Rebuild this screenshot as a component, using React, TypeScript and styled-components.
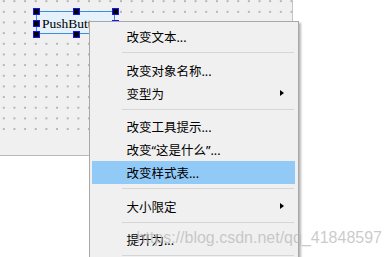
import React from "react";
import styled, { createGlobalStyle } from "styled-components";

const Global = createGlobalStyle`
  html, body {
    margin: 0;
    padding: 0;
    background: #ffffff;
  }
`;

const Canvas = styled.div`
  position: relative;
  width: 392px;
  height: 257px;
  overflow: hidden;
  background: #ffffff;
  font-family: "Noto Sans", "Noto Sans CJK SC", sans-serif;
`;

const Form = styled.div`
  position: relative;
  box-sizing: border-box;
  width: 293px;
  height: 156px;
  background: #f0f0f0;
  border-right: 1px solid #c4c4c4;
  border-bottom: 1px solid #b9b9b9;

  &::before {
    content: "";
    position: absolute;
    left: 0;
    top: 0;
    right: 0;
    height: 134px;
    background-image: radial-gradient(
      circle at 1px 1px,
      #b3b3b3 0.7px,
      transparent 1.1px
    );
    background-size: 10.67px 10.67px;
    background-position: 2.8px 0.2px;
  }
`;

const Widget = styled.div`
  position: absolute;
  left: 36px;
  top: 11px;
  width: 79px;
  height: 23px;
  box-sizing: border-box;
  display: flex;
  align-items: center;
  padding: 2px 0 0 5px;
  background: #e5f1fb;
  border: 1px solid #3c8fe0;
  font-family: "Liberation Serif", serif;
  font-size: 13.5px;
  color: #000;
  white-space: nowrap;
`;

const Handle = styled.span<{ $x: string; $y: string }>`
  position: absolute;
  left: ${(p) => p.$x};
  top: ${(p) => p.$y};
  width: 5px;
  height: 5px;
  margin: -4px 0 0 -4px;
  background: #000;
  border: 1px solid #1414ff;
`;

const Menu = styled.div`
  position: absolute;
  left: 89px;
  top: 21px;
  width: 210px;
  box-sizing: border-box;
  padding: 3px 3px 0 2px;
  background: #f0f0f0;
  border: 1px solid #a8a8a8;
  box-shadow: 2px 2px 2px rgba(0, 0, 0, 0.28);
`;

const Item = styled.div<{ $active?: boolean }>`
  height: 23px;
  display: flex;
  align-items: center;
  padding: 0 11px 0 34.5px;
  font-size: 12.5px;
  color: #000;
  background: ${(p) => (p.$active ? "#91c9f7" : "transparent")};
  white-space: nowrap;
`;

const Arrow = styled.span`
  margin-left: auto;
  width: 0;
  height: 0;
  border-left: 4.5px solid #000;
  border-top: 3.5px solid transparent;
  border-bottom: 3.5px solid transparent;
`;

const Separator = styled.div`
  height: 1px;
  margin: 4px 1px 5.5px 30px;
  background: #d6d6d6;
`;

const Watermark = styled.div`
  position: absolute;
  right: 10px;
  top: 229px;
  font-family: "Liberation Sans", Arial, sans-serif;
  font-size: 16px;
  color: rgba(185, 185, 185, 0.75);
  white-space: nowrap;
  pointer-events: none;
`;

type Entry = { label: string; sub?: boolean; active?: boolean } | "sep";

const entries: Entry[] = [
  { label: "改变文本..." },
  "sep",
  { label: "改变对象名称..." },
  { label: "变型为", sub: true },
  "sep",
  { label: "改变工具提示..." },
  { label: "改变\u201c这是什么\u201d..." },
  { label: "改变样式表...", active: true },
  "sep",
  { label: "大小限定", sub: true },
  "sep",
  { label: "提升为..." },
  "sep",
];

export default function App() {
  return (
    <Canvas>
      <Global />
      <Form>
        <Widget>
          PushButton
          <Handle $x="0px" $y="0px" />
          <Handle $x="39.5px" $y="0px" />
          <Handle $x="79px" $y="0px" />
          <Handle $x="0px" $y="11.5px" />
          <Handle $x="79px" $y="11.5px" />
          <Handle $x="0px" $y="23px" />
          <Handle $x="39.5px" $y="23px" />
          <Handle $x="79px" $y="23px" />
        </Widget>
      </Form>
      <Menu>
        {entries.map((e, i) =>
          e === "sep" ? (
            <Separator key={i} />
          ) : (
            <Item key={i} $active={e.active}>
              {e.label}
              {e.sub && <Arrow />}
            </Item>
          )
        )}
      </Menu>
      <Watermark>https://blog.csdn.net/qq_41848597</Watermark>
    </Canvas>
  );
}
